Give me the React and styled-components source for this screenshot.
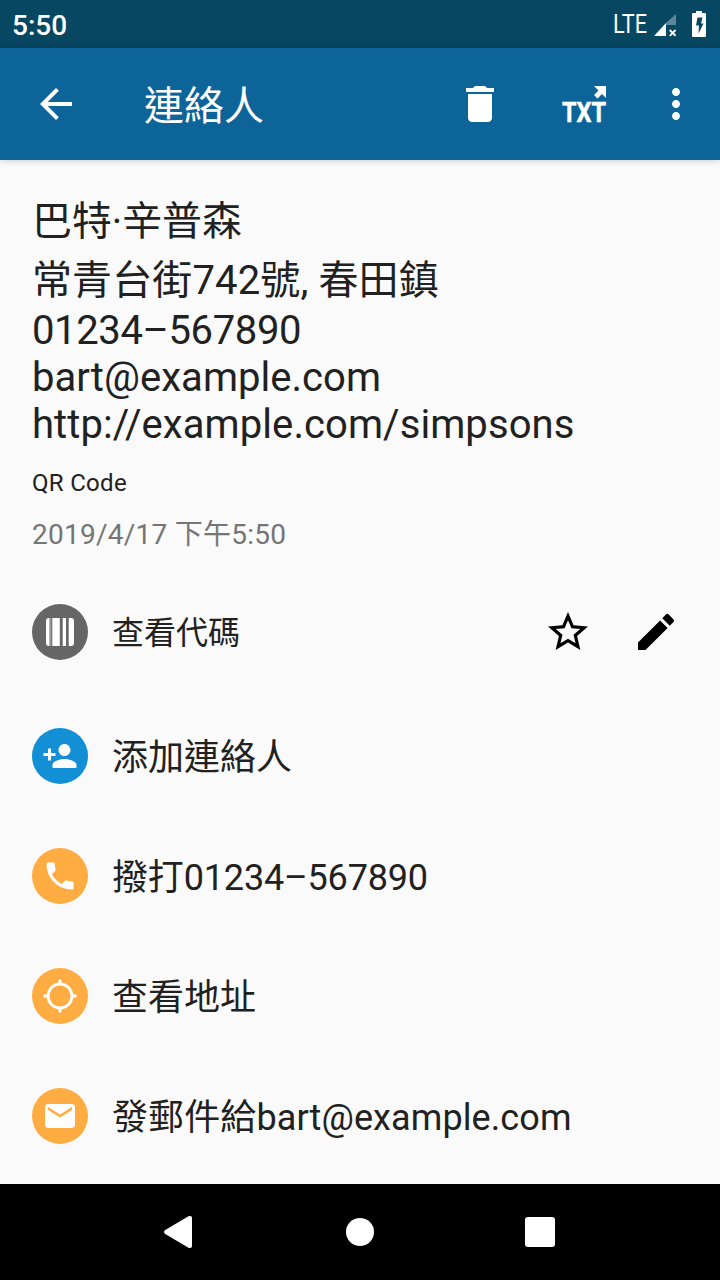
import styled, { createGlobalStyle } from "styled-components";
import {
  MdArrowBack,
  MdEdit,
  MdLocationSearching,
  MdMail,
  MdMoreVert,
  MdPersonAdd,
  MdPhone,
  MdStarBorder,
} from "react-icons/md";

const infoLines = [
  { text: "巴特·辛普森", height: 59, spacing: -0.1 },
  { text: "常青台街742號, 春田鎮", height: 50, spacing: 0.12 },
  { text: "01234–567890", height: 47, spacing: -0.36 },
  { text: "bart@example.com", height: 47, spacing: 0.04 },
  { text: "http://example.com/simpsons", height: 47, spacing: 0.08 },
];

const actions = [
  { label: "添加連絡人", color: "#138fd5", icon: MdPersonAdd },
  {
    label: "撥打01234–567890",
    color: "#ffac42",
    icon: MdPhone,
    spacing: -0.16,
  },
  { label: "查看地址", color: "#ffac42", icon: MdLocationSearching },
  {
    label: "發郵件給bart@example.com",
    color: "#ffac42",
    icon: MdMail,
    spacing: 0.1,
  },
];

const DeleteIcon = () => (
  <svg width="48" height="48" viewBox="0 0 48 48" fill="#fff">
    <path d="M12 38c0 2.2 1.8 4 4 4h16c2.2 0 4-1.8 4-4V14H12v24zM38 8h-7c-1-1.500-2-2-3.500-2h-7C19 6 18 6.500 17 8h-7v4h28V8z" />
  </svg>
);

const TxtIcon = () => (
  <svg width="48" height="48" viewBox="0 0 48 48" fill="#fff">
    <path d="M34 6h12v12l-4-4-4.500 4.500-3.500-3.500 4.500-4.500z" />
    <text
      x="2"
      y="42"
      fontSize="28"
      fontWeight="700"
      textLength="44"
      lengthAdjust="spacingAndGlyphs"
      stroke="#fff"
      strokeWidth="0.5"
    >
      TXT
    </text>
  </svg>
);

const BarcodeIcon = () => (
  <svg width="28" height="28" viewBox="0 0 28 28" fill="#fff">
    <path d="M3 0h0.500v28H3a3 3 0 0 1-3-3V3a3 3 0 0 1 3-3z" />
    <path d="M4.300 0h0.900v28h-0.900z" opacity="0.5" />
    <path d="M6.300 0h7.500v28H6.300zM16.700 0h3.300v28h-3.300z" />
    <path d="M22.700 0H25a3 3 0 0 1 3 3v22a3 3 0 0 1-3 3h-2.300z" />
  </svg>
);

const SignalIcon = () => (
  <svg width="24" height="24" viewBox="0 0 24 24" fill="#fff">
    <path d="M23 2v11H13v-2z" opacity="0.35" />
    <path d="M13 11v13H1z" />
    <path
      d="M16.800 18l5.800 5.800M22.600 18l-5.800 5.800"
      stroke="#fff"
      strokeWidth="1.800"
    />
  </svg>
);

const BatteryIcon = () => (
  <svg width="14" height="26" viewBox="0 0 14 26">
    <path
      d="M4 0h6v2h3a1 1 0 0 1 1 1v22a1 1 0 0 1-1 1H1a1 1 0 0 1-1-1V3a1 1 0 0 1 1-1h3z"
      fill="#fff"
    />
    <path d="M5.500 6.500h5l-1.500 6h2.500L6.500 22.500l.5-8H4z" fill="#084762" />
  </svg>
);

const App = () => {
  return (
    <Screen>
      <GlobalStyle />
      <StatusBar>
        <Clock>5:50</Clock>
        <Network width="34" height="32" viewBox="0 0 34 32" fill="#fff">
          <text
            x="0"
            y="25"
            fontSize="25"
            fontWeight="400"
            textLength="34"
            lengthAdjust="spacingAndGlyphs"
          >
            LTE
          </text>
        </Network>
        <SignalIcon />
        <BatteryBox>
          <BatteryIcon />
        </BatteryBox>
      </StatusBar>
      <Toolbar>
        <MdArrowBack size={48} />
        <Title>連絡人</Title>
        <ToolbarIcons>
          <DeleteIcon />
          <TxtIcon />
          <MdMoreVert size={48} />
        </ToolbarIcons>
      </Toolbar>
      <Content>
        {infoLines.map((line) => (
          <InfoLine
            key={line.text}
            $height={line.height}
            $spacing={line.spacing}
          >
            {line.text}
          </InfoLine>
        ))}
        <Format>QR Code</Format>
        <Time>2019/4/17 下午5:50</Time>
        <CodeRow>
          <IconCircle $color="#666">
            <BarcodeIcon />
          </IconCircle>
          <Label $size={32} $top={2}>
            查看代碼
          </Label>
          <CodeButtons>
            <MdStarBorder size={48} />
            <MdEdit size={48} />
          </CodeButtons>
        </CodeRow>
        {actions.map(({ label, color, icon: Icon, spacing = 0 }) => (
          <ActionRow key={label}>
            <IconCircle $color={color}>
              <Icon size={36} />
            </IconCircle>
            <Label $size={36} $top={4} $spacing={spacing}>
              {label}
            </Label>
          </ActionRow>
        ))}
      </Content>
      <NavBar>
        <svg width="30" height="34" viewBox="0 0 30 34" fill="#fff">
          <path d="M1.800 15.300L25.500 1.300Q29 0 29 3v28Q29 34 25.500 32.700L1.800 18.700Q0 17 1.800 15.300z" />
        </svg>
        <HomeButton />
        <RecentButton />
      </NavBar>
    </Screen>
  );
};

const GlobalStyle = createGlobalStyle`
  body {
    margin: 0;
    font-family: Roboto, "Noto Sans CJK TC", sans-serif;
  }

  svg {
    display: block;
    flex-shrink: 0;
    overflow: visible;
  }
`;

const Screen = styled.div`
  width: 720px;
  height: 1280px;
  display: flex;
  flex-direction: column;
  background: #fafafa;
  color: #212121;
  overflow: hidden;
`;

const StatusBar = styled.div`
  height: 48px;
  display: flex;
  align-items: center;
  box-sizing: border-box;
  padding: 0 14px 0 12px;
  background: #084762;
  color: #fff;
`;

const Clock = styled.div`
  flex: 1;
  font-size: 28px;
  font-weight: 500;
  line-height: 48px;
  padding-top: 3px;
`;

const Network = styled.svg`
  margin-right: 6px;
`;

const BatteryBox = styled.div`
  margin-left: 15px;
`;

const Toolbar = styled.div`
  height: 112px;
  display: flex;
  align-items: center;
  box-sizing: border-box;
  padding: 0 20px 0 32px;
  background: #0d6498;
  color: #fff;
  box-shadow: 0 1px 7px rgba(0, 0, 0, 0.18);
`;

const Title = styled.div`
  margin-left: 64px;
  padding-top: 4px;
  font-size: 40px;
  line-height: 47px;
`;

const ToolbarIcons = styled.div`
  display: flex;
  margin-left: auto;

  svg:nth-child(2) {
    margin: 0 44px 0 56px;
  }
`;

const Content = styled.div`
  flex: 1;
  padding: 38px 16px 0 32px;
`;

const InfoLine = styled.div`
  height: ${({ $height }) => $height}px;
  font-size: 40px;
  line-height: 47px;
  letter-spacing: ${({ $spacing }) => $spacing}px;
  white-space: nowrap;
`;

const Format = styled.div`
  margin-top: 21px;
  font-size: 24px;
  line-height: 28px;
  letter-spacing: 0.3px;
`;

const Time = styled.div`
  margin-top: 21px;
  font-size: 28px;
  line-height: 33px;
  letter-spacing: 0.25px;
  color: #757575;
`;

const CodeRow = styled.div`
  display: flex;
  align-items: center;
  height: 128px;
  margin-top: 17px;
`;

const ActionRow = styled.div`
  display: flex;
  align-items: center;
  height: 120px;
`;

const IconCircle = styled.div`
  width: 56px;
  height: 56px;
  display: flex;
  align-items: center;
  justify-content: center;
  border-radius: 50%;
  background: ${({ $color }) => $color};
  color: #fff;
`;

const Label = styled.div`
  margin-left: 24px;
  padding-top: ${({ $top }) => $top}px;
  font-size: ${({ $size }) => $size}px;
  line-height: 42px;
  letter-spacing: ${({ $spacing = 0 }) => $spacing}px;
  white-space: nowrap;
`;

const CodeButtons = styled.div`
  display: flex;
  gap: 40px;
  margin-left: auto;
  margin-right: 24px;
  color: #000;
`;

const NavBar = styled.div`
  height: 96px;
  display: flex;
  align-items: center;
  justify-content: space-between;
  box-sizing: border-box;
  padding: 0 165px 0 163px;
  background: #000;
`;

const HomeButton = styled.div`
  width: 28px;
  height: 28px;
  margin-left: 2px;
  border-radius: 50%;
  background: #fff;
`;

const RecentButton = styled.div`
  width: 30px;
  height: 30px;
  border-radius: 3px;
  background: #fff;
`;

export default App;
